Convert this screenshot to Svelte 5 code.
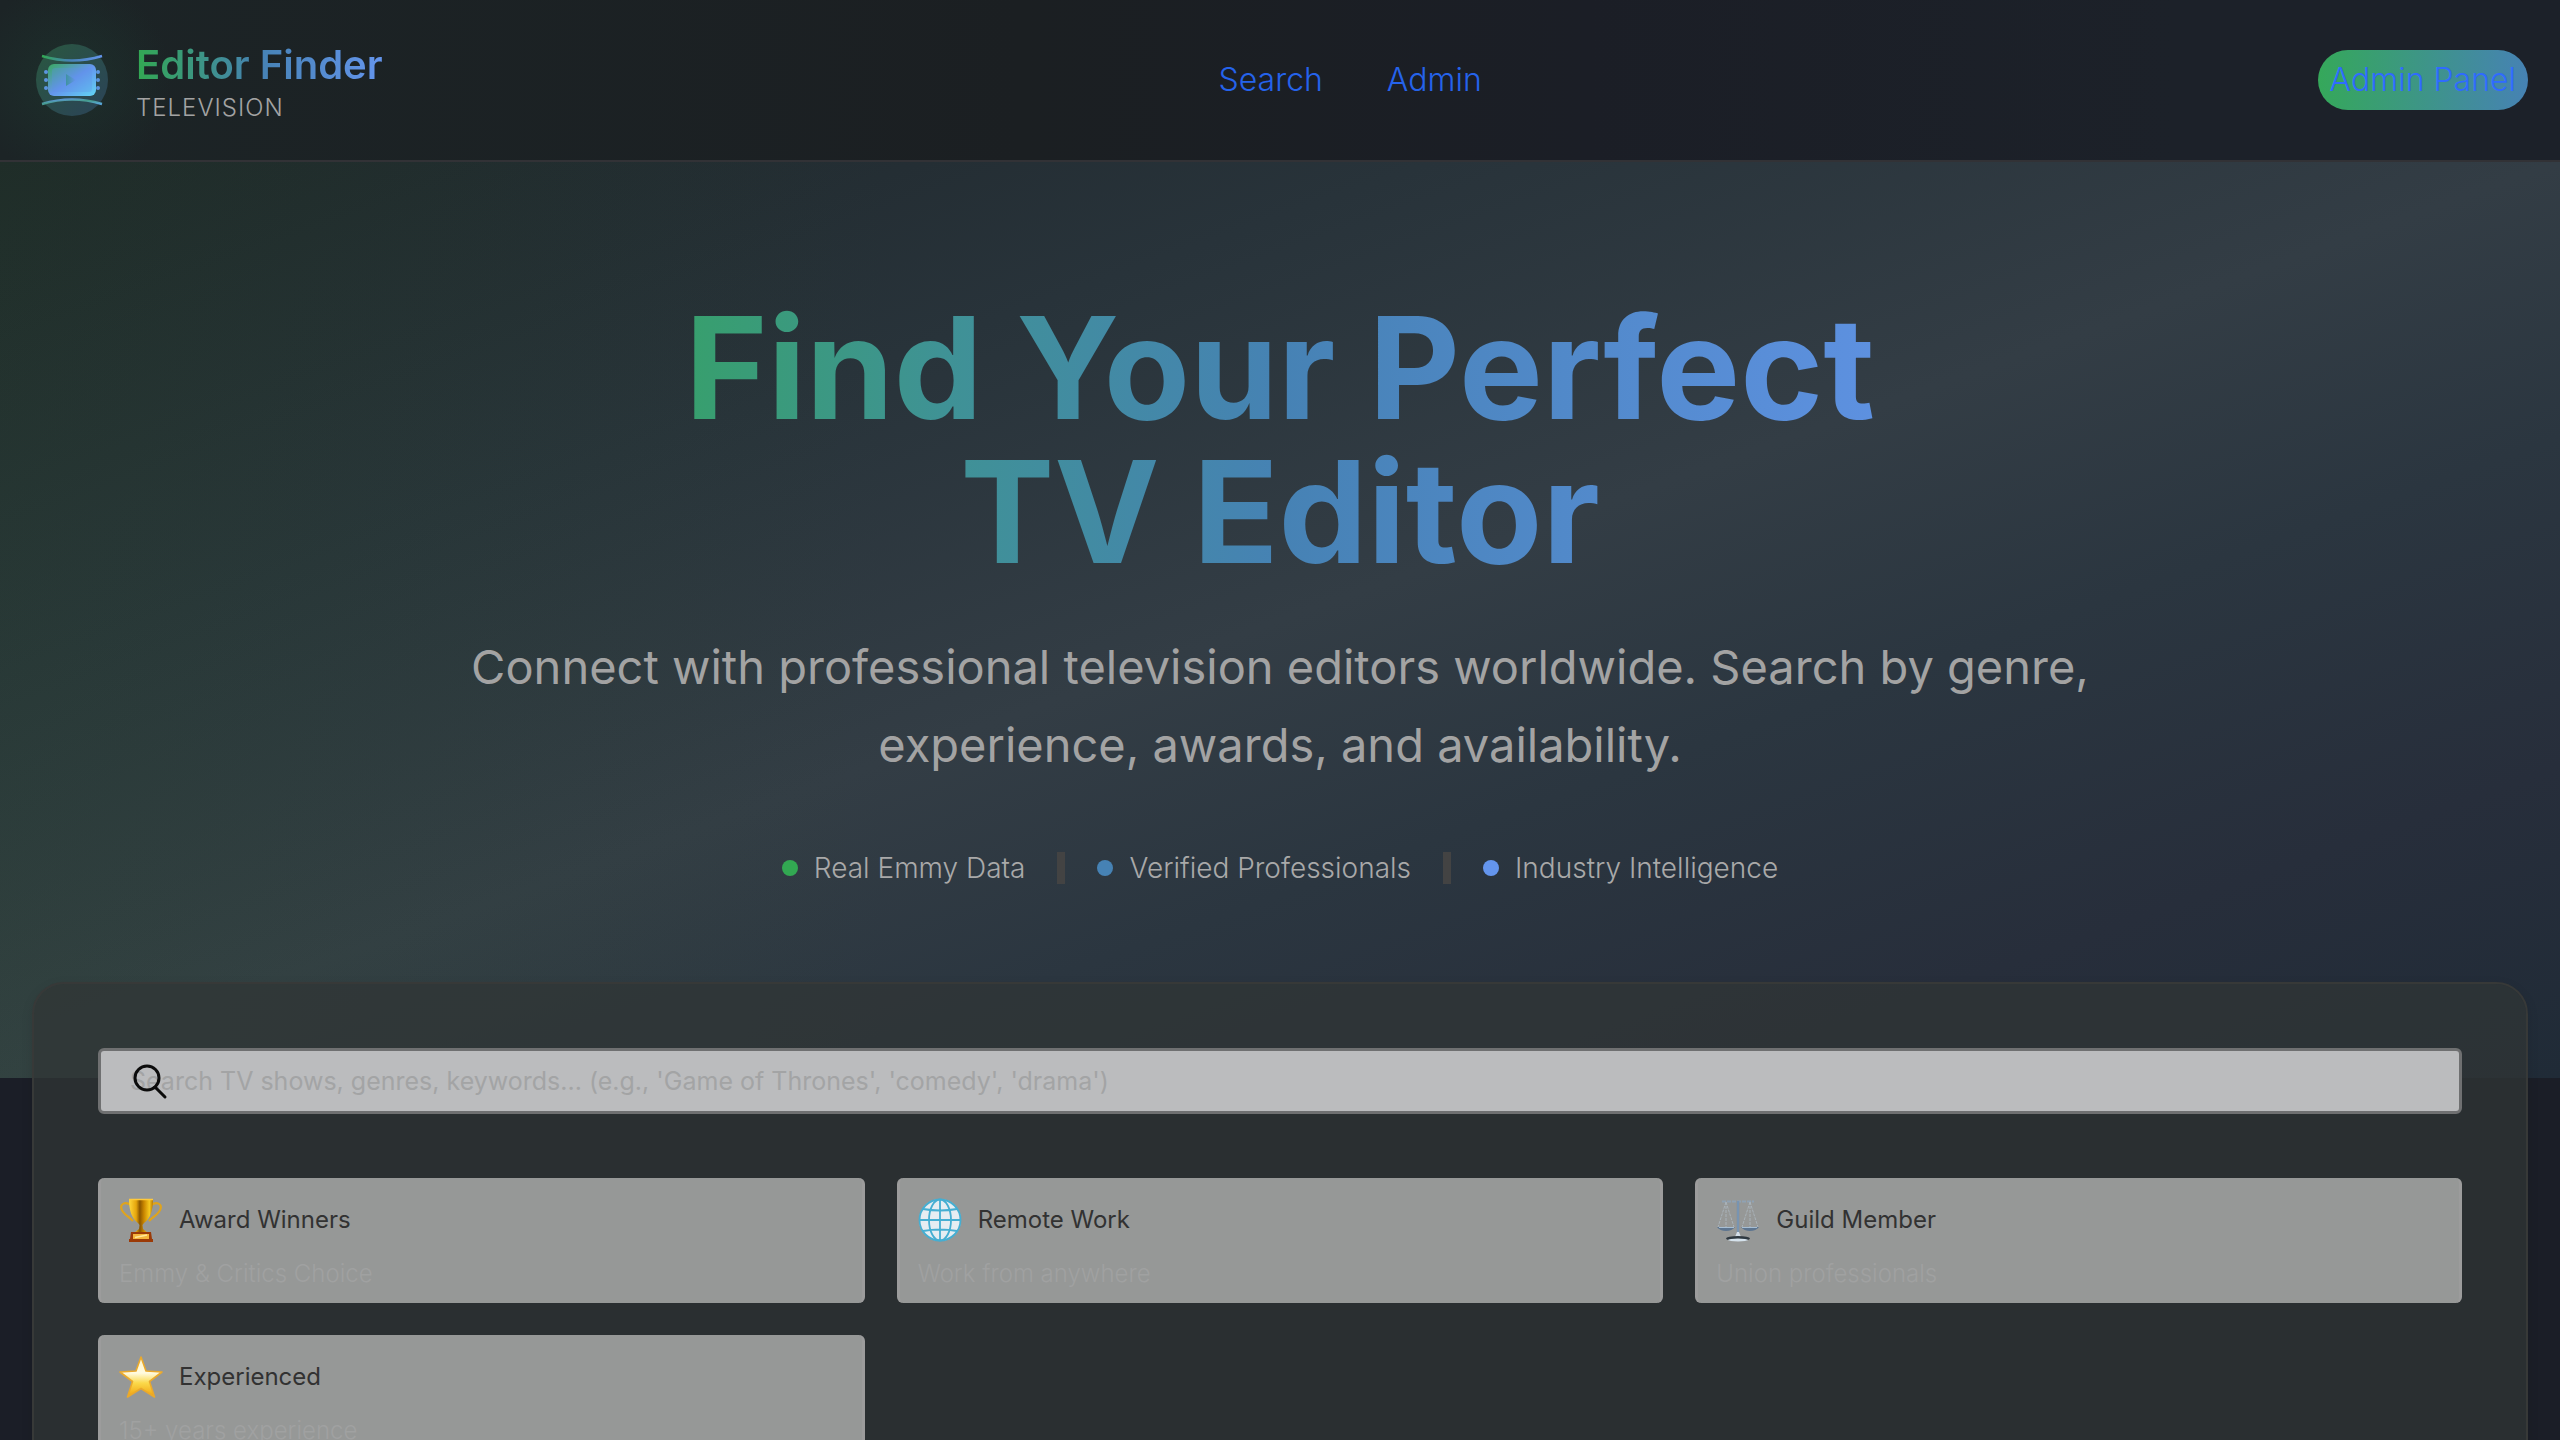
<script>
  const stats = [
    { label: 'Real Emmy Data', tone: 'green' },
    { label: 'Verified Professionals', tone: 'steel' },
    { label: 'Industry Intelligence', tone: 'blue' },
  ];
  const filters = [
    { icon: 'trophy', title: 'Award Winners', note: 'Emmy & Critics Choice' },
    { icon: 'globe', title: 'Remote Work', note: 'Work from anywhere' },
    { icon: 'scales', title: 'Guild Member', note: 'Union professionals' },
    { icon: 'star', title: 'Experienced', note: '15+ years experience' },
  ];
  let query = $state('');
</script>

<header class="topbar">
  <div class="brand">
    <svg class="logo" viewBox="0 0 80 80" aria-hidden="true">
      <defs>
        <linearGradient id="line" x1="0" y1="0" x2="1" y2="0">
          <stop offset="0" stop-color="#32a852" />
          <stop offset=".45" stop-color="#4682b4" />
          <stop offset="1" stop-color="#6495ed" />
        </linearGradient>
        <linearGradient id="lineLow" x1="0" y1="0" x2="1" y2="1">
          <stop offset="0" stop-color="#6495ed" />
          <stop offset=".5" stop-color="#459c8c" />
          <stop offset="1" stop-color="#5aa6dd" />
        </linearGradient>
        <linearGradient id="disc" x1="0" y1="0" x2="1" y2="1">
          <stop offset="0" stop-color="#2a5840" />
          <stop offset="1" stop-color="#2b4258" />
        </linearGradient>
        <linearGradient id="screen" x1="0" y1="0" x2="1" y2="1">
          <stop offset="0" stop-color="#3aa961" />
          <stop offset=".5" stop-color="#6495ed" />
          <stop offset="1" stop-color="#62d4f5" />
        </linearGradient>
        <linearGradient id="play" x1="0" y1="0" x2="1" y2="0">
          <stop offset="0" stop-color="#3f93a0" />
          <stop offset="1" stop-color="#6495ed" />
        </linearGradient>
      </defs>
      <circle cx="40" cy="40" r="36" fill="url(#disc)" />
      <path d="M10 16Q40 25 70 16" fill="none" stroke="url(#line)" stroke-width="2.4" />
      <path d="M10 64Q40 55 70 64" fill="none" stroke="url(#lineLow)" stroke-width="2.4" />
      <g fill="#5b95e0">
        <circle cx="14" cy="32" r="2" /><circle cx="14" cy="40" r="2" /><circle cx="14" cy="48" r="2" />
        <circle cx="66" cy="32" r="2" /><circle cx="66" cy="40" r="2" /><circle cx="66" cy="48" r="2" />
      </g>
      <rect x="16" y="24" width="48" height="32" rx="6" fill="url(#screen)" />
      <rect x="20" y="28" width="40" height="24" rx="3" fill="#5f8fe6" opacity=".28" />
      <path d="M34 34L44 40L34 46Z" fill="url(#play)" />
    </svg>
    <div class="brand-text">
      <span class="name">Editor Finder</span>
      <span class="sub">TELEVISION</span>
    </div>
  </div>
  <nav class="links" aria-label="Main">
    <a href="#search">Search</a>
    <a href="#admin">Admin</a>
  </nav>
  <a class="panel-link" href="#panel">Admin Panel</a>
</header>

<main>
  <section class="hero">
    <h1>Find Your Perfect TV&nbsp;Editor</h1>
    <p class="lead">Connect with professional television editors worldwide. Search by genre, experience, awards, and availability.</p>
    <ul class="stats">
      {#each stats as s, i}
        {#if i > 0}<li class="divider" aria-hidden="true"></li>{/if}
        <li class="stat"><span class="dot {s.tone}"></span>{s.label}</li>
      {/each}
    </ul>
  </section>

  <section class="finder" id="search">
    <div class="search">
      <input
        type="search"
        aria-label="Search editors"
        placeholder="Search TV shows, genres, keywords... (e.g., 'Game of Thrones', 'comedy', 'drama')"
        bind:value={query}
      />
      <svg class="lens" viewBox="0 0 36 36" aria-hidden="true">
        <circle cx="15" cy="14" r="12" />
        <path d="M23 23L33 33" />
      </svg>
    </div>
    <div class="filters">
      {#each filters as f}
        <button type="button" class="filter">
          <span class="head">
            <svg class="icon" viewBox="0 0 44 44" aria-hidden="true">
              {#if f.icon === 'trophy'}
                <defs>
                  <linearGradient id="gold" x1="0" x2="1" y1="0" y2="0">
                    <stop offset="0" stop-color="#ffd83c" /><stop offset=".3" stop-color="#e5a50c" />
                    <stop offset=".45" stop-color="#8a5600" /><stop offset=".62" stop-color="#c98600" />
                    <stop offset=".85" stop-color="#f6c81f" /><stop offset="1" stop-color="#b87700" />
                  </linearGradient>
                </defs>
                <path d="M12 7C6 3 1 6 2.500 11C4 16 9 18 14 23M32 7C38 3 43 6 41.500 11C40 16 35 18 30 23" fill="none" stroke="#e0a41c" stroke-width="2.200" />
                <path d="M10 1H34C34 13 31 21 25 25L23.500 27L24 31L29 35H15L20 31L20.500 27L19 25C13 21 10 13 10 1Z" fill="url(#gold)" />
                <path d="M10 1.500H34" stroke="#ffc93a" stroke-width="1.500" />
                <path d="M12 34H32L33 41H34V44H10V41H11Z" fill="#9b3a07" />
                <path d="M14 36H30V41H14Z" fill="#f4b43c" />
                <path d="M16 39.500L28 37" stroke="#ffe79a" stroke-width="1.500" />
              {:else if f.icon === 'globe'}
                <circle cx="22" cy="22" r="21" fill="#e6edf2" />
                <g fill="none" stroke="#45aed2" stroke-width="1.800">
                  <circle cx="22" cy="22" r="20.500" />
                  <ellipse cx="22" cy="22" rx="11" ry="20.500" />
                  <path d="M22 2V42M1 22H43M5 11Q22 14 39 11M5 33Q22 30 39 33" />
                </g>
              {:else if f.icon === 'scales'}
                <path d="M6 3.500H38" stroke="#8fa2b4" stroke-width="2" stroke-dasharray="4 1" />
                <path d="M10 4L2 29M10 4V29M10 4L18 29M34 4L26 29M34 4V29M34 4L42 29" stroke="#a9b2b9" stroke-width="1" stroke-dasharray="3 1" fill="none" />
                <path d="M22 3V37" stroke="#5e7d9e" stroke-width="2.200" />
                <path d="M22 3V38" stroke="#a9c0d6" stroke-width=".7" />
                <path d="M1 29H19Q16 33 10 33Q4 33 1 29ZM25 29H43Q40 33 34 33Q28 33 25 29Z" fill="#5d7590" />
                <path d="M3 29.500H18M26 29.500H41" stroke="#a7bed3" stroke-width="1" />
                <path d="M19 39L21 34H23L25 39Z" fill="#d3dee8" />
                <ellipse cx="22" cy="40.500" rx="12" ry="2.500" fill="#2f3941" />
                <ellipse cx="22" cy="42" rx="10" ry="1.500" fill="#d5e2ec" />
              {:else}
                <defs>
                  <linearGradient id="starFill" x1="0" x2="0" y1="0" y2="1">
                    <stop offset="0" stop-color="#fff4c8" /><stop offset=".4" stop-color="#fffbe0" />
                    <stop offset=".65" stop-color="#fbd94a" /><stop offset="1" stop-color="#f0a00c" />
                  </linearGradient>
                </defs>
                <path d="M22 2L27 16L43 17L30.500 26.500L35.500 42L22 33.500L8.500 42L13.500 26.500L1 17L17 16Z" fill="url(#starFill)" stroke="#eaa92c" stroke-width="1.600" stroke-linejoin="round" />
              {/if}
            </svg>
            <span class="title">{f.title}</span>
          </span>
          <span class="note">{f.note}</span>
        </button>
      {/each}
    </div>
  </section>
</main>

<style>
  :global(body) {
    margin: 0;
    background: #1b1e27;
    font-family: Inter, 'Noto Sans', sans-serif;
  }
  :global(*) {
    box-sizing: border-box;
  }

  .topbar {
    display: flex;
    align-items: center;
    justify-content: space-between;
    padding: 32px;
    min-height: 162px;
    border-bottom: 2px solid #323236;
    background:
      radial-gradient(circle 100px at 72px 80px, rgba(30, 56, 48, 0.4) 30%, transparent),
      linear-gradient(90deg, #1c2426, #1b1f22 40%, #1b1e26 62%, #1c2129 85%, #1c2129);
  }
  .brand {
    display: flex;
    align-items: center;
    gap: 24px;
  }
  .logo {
    width: 80px;
    height: 80px;
  }
  .brand-text {
    display: flex;
    flex-direction: column;
  }
  .name {
    font-size: 40px;
    line-height: 56px;
    font-weight: 600;
    color: transparent;
    background: linear-gradient(90deg, #32a852, #4682b4 50%, #6495ed);
    background-clip: text;
  }
  .sub {
    font-size: 24px;
    line-height: 30px;
    font-weight: 300;
    letter-spacing: 1px;
    color: #a3a3a3;
  }
  .links {
    display: flex;
    gap: 64px;
  }
  .links a {
    font-size: 32px;
    line-height: 48px;
    font-weight: 300;
    color: #2563eb;
    text-decoration: none;
  }
  .panel-link {
    padding: 6px 12px;
    border-radius: 30px;
    font-size: 32px;
    line-height: 48px;
    font-weight: 300;
    color: #2f6bff;
    text-decoration: none;
    background: linear-gradient(90deg, #35a85a, #4682b4);
  }

  .hero {
    display: flex;
    flex-direction: column;
    align-items: center;
    padding: 134px 32px 190px;
    text-align: center;
    background:
      linear-gradient(90deg, rgba(45, 100, 35, 0.13), transparent 35%),
      linear-gradient(to bottom right, #1d2529, #28333a 28%, #333d45 50%, #2b3640 65%, #272e3b 83%, #202b37);
  }
  h1 {
    margin: 0;
    width: 100%;
    max-width: 1536px;
    padding: 0 96px;
    font-size: 141px;
    line-height: 144px;
    font-weight: 700;
    color: transparent;
    background: linear-gradient(90deg, #32a852, #3f9295 28%, #4682b4 50%, #6495ed);
    background-clip: text;
  }
  .lead {
    margin: 44px 0 0;
    max-width: 1728px;
    font-size: 47px;
    line-height: 78px;
    font-weight: 400;
    color: #a3a3a3;
  }
  .stats {
    display: flex;
    align-items: center;
    gap: 32px;
    margin: 64px 0 0;
    padding: 0;
    list-style: none;
  }
  .stat {
    display: flex;
    align-items: center;
    gap: 16px;
    font-size: 28px;
    line-height: 40px;
    font-weight: 300;
    color: #a9a9a9;
  }
  .dot {
    width: 16px;
    height: 16px;
    border-radius: 50%;
  }
  .green {
    background: #32a852;
  }
  .steel {
    background: #4682b4;
  }
  .blue {
    background: #6495ed;
  }
  .divider {
    width: 8px;
    height: 32px;
    background: #434343;
  }

  .finder {
    position: relative;
    margin: -96px 32px 0;
    padding: 64px;
    border: 2px solid #373938;
    border-radius: 32px;
    background: rgba(48, 54, 54, 0.75);
    background-clip: padding-box;
    box-shadow: 0 4px 12px rgba(0, 0, 0, 0.1);
  }
  .search {
    position: relative;
    margin-bottom: 64px;
  }
  input {
    display: block;
    width: 100%;
    height: 66px;
    padding: 0 29px;
    border: 3px solid #6f7071;
    border-radius: 6px;
    background: #bbbcbe;
    font: 400 25px/40px Inter, 'Noto Sans', sans-serif;
    color: #222;
    appearance: none;
  }
  input::placeholder {
    color: #a3a4a5;
    opacity: 1;
  }
  .lens {
    position: absolute;
    left: 34px;
    top: 16px;
    width: 36px;
    height: 36px;
    fill: none;
    stroke: #0c0c0c;
    stroke-width: 3;
    stroke-linecap: round;
  }
  .filters {
    display: grid;
    grid-template-columns: repeat(3, 1fr);
    gap: 32px;
  }
  .filter {
    display: flex;
    flex-direction: column;
    gap: 16px;
    padding: 20px 18px 13px;
    border: 0;
    border-left: 3px solid #9c9c9c;
    border-right: 3px solid #9c9c9c;
    border-radius: 6px;
    background: #969897;
    font-family: inherit;
    text-align: left;
  }
  .head {
    display: flex;
    align-items: center;
    gap: 16px;
  }
  .icon {
    width: 44px;
    height: 44px;
  }
  .title {
    font-size: 24px;
    line-height: 32px;
    font-weight: 400;
    color: #323232;
  }
  .note {
    font-size: 24px;
    line-height: 32px;
    font-weight: 300;
    color: #a0a1a1;
  }
</style>
